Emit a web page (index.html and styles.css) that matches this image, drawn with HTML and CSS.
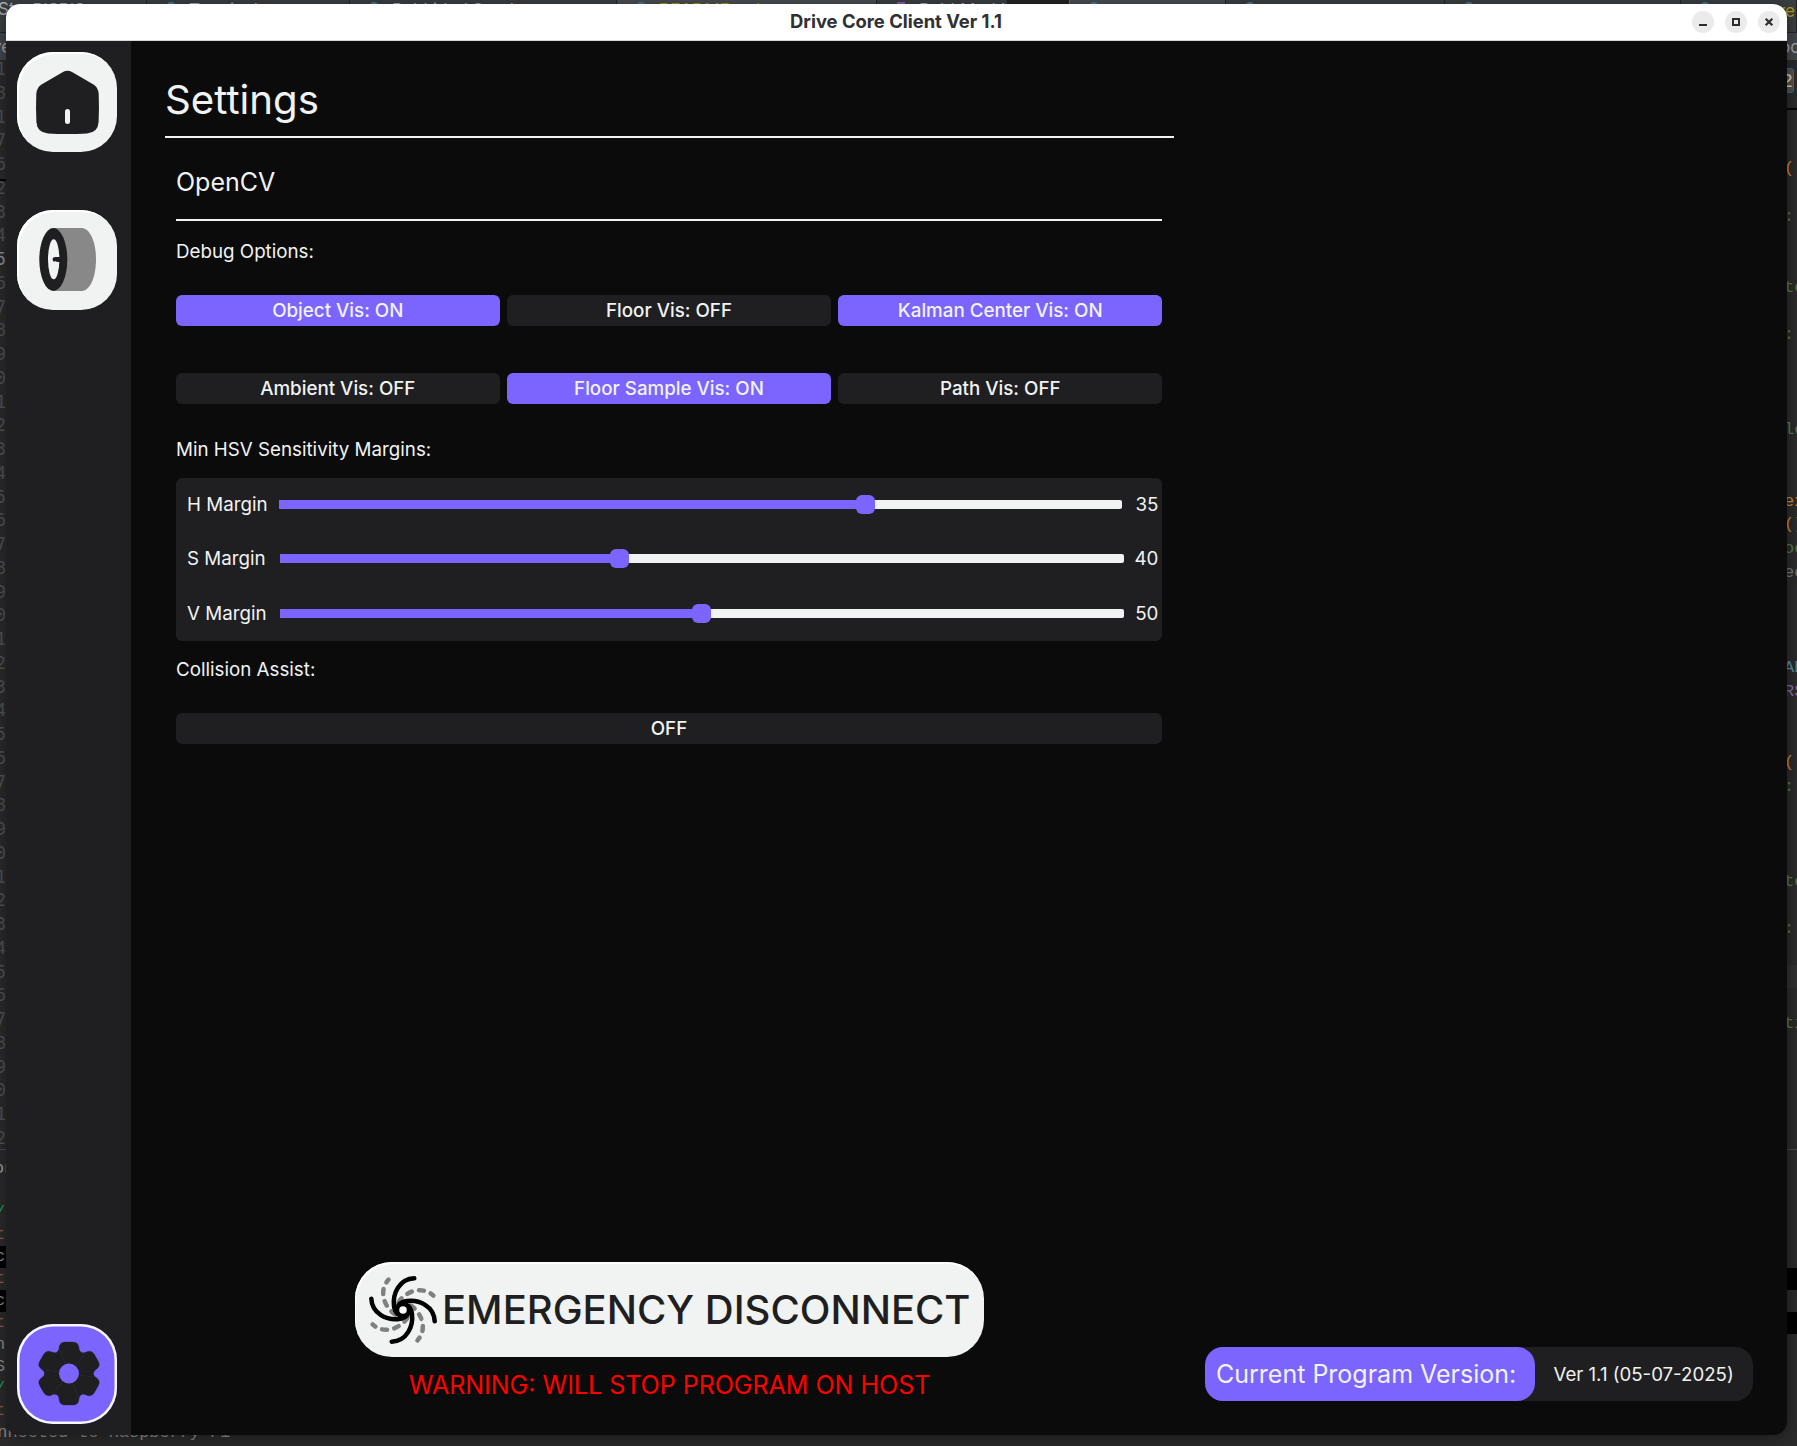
FILE: index.html
```html
<!DOCTYPE html>
<html lang="en">
<head>
<meta charset="utf-8">
<title>Drive Core Client Ver 1.1</title>
<link rel="stylesheet" href="styles.css">
</head>
<body>
<div class="desktop">
  <!-- editor window behind the client -->
  <div class="tabs" aria-hidden="true">
    <div class="tab t1"><span>Sto</span><span class="up">PISPIS</span></div>
    <div class="tab t2"><i class="dot"></i><span>Terminal</span></div>
    <div class="tab t3"><i class="dot"></i><span>RobLidarl Send</span></div>
    <div class="tab t4 active"><i class="dot"></i><span class="yellow">README.md</span></div>
    <div class="tab t5"><i class="dot violet"></i><span>RobLMarkI</span></div>
    <div class="tab t6"></div>
    <div class="tab t7 active"><i class="dot"></i></div>
    <div class="tab t8"><i class="dot"></i></div>
    <div class="tab t9"><i class="dot"></i></div>
    <div class="tab t10"><i class="dot"></i><span class="yellow re">re</span></div>
  </div>
  <div class="path-bar" aria-hidden="true"><span>ve</span><span>oc</span></div>
  <div class="tool" aria-hidden="true">2</div>
  <div class="rule rule-right"></div>
  <div class="rule rule-left"></div>
  <div class="gutter" aria-hidden="true"><b>1</b><b>8</b><b>1</b><b>7</b><b>6</b><b>2</b><b>3</b><b>4</b><b class="here">5</b><b>6</b><b>7</b><b>8</b><b>9</b><b>0</b><b>1</b><b>2</b><b>3</b><b>4</b><b>5</b><b>6</b><b>7</b><b>8</b><b>9</b><b>0</b><b>1</b><b>2</b><b>3</b><b>4</b><b>5</b><b>6</b><b>7</b><b>8</b><b>9</b><b>0</b><b>1</b><b>2</b><b>3</b><b>4</b><b>5</b><b>6</b><b>7</b><b>8</b><b>9</b><b>0</b><b>1</b><b>2</b></div>
  <div class="code" aria-hidden="true"><b class="or">(</b><b></b><b class="gr">:'</b><b></b><b></b><b class="gr">te</b><b></b><b class="gr">:'</b><b></b><b></b><b></b><b class="gr">le</b><b></b><b></b><b class="or">ex</b><b class="or">(]</b><b class="gr">oc</b><b>ec</b><b></b><b></b><b></b><b class="bl">AN</b><b class="vi">RS</b><b></b><b></b><b class="or">(</b><b class="gr">:</b><b></b><b></b><b></b><b class="gr">te</b><b></b><b class="gr">:</b><b></b><b class="cur"></b><b></b><b class="gr">ti</b></div>
  <div class="terminal" aria-hidden="true">
    <b class="bl">on</b><b></b><b class="green">/</b><b class="red">t</b><b class="sel">c</b><b class="red tail">t</b><b class="sel">c</b><b class="red tail">t</b><b>n</b><b>S</b><b class="green">/</b><b class="red">t</b><b class="full">Connected to Raspberry Pi</b>
  </div>

  <div class="window">
    <header class="titlebar">
      <span></span>
      <h1>Drive Core Client Ver 1.1</h1>
      <div class="controls">
        <button class="ctl" aria-label="Minimize"><svg viewBox="0 0 22 22"><path d="M7 13h8v2H7z"/></svg></button>
        <button class="ctl" aria-label="Maximize"><svg viewBox="0 0 22 22"><path d="M7 7h8v8H7zM9 9v4h4V9z" fill-rule="evenodd"/></svg></button>
        <button class="ctl" aria-label="Close"><svg viewBox="0 0 22 22"><path d="M7.7 7.7l6.6 6.6M14.3 7.7l-6.6 6.6" class="line"/></svg></button>
      </div>
    </header>
    <div class="body">
      <nav class="sidebar">
        <button class="nav" aria-label="Home">
          <svg viewBox="0 0 100 100"><path class="ink" d="M46 19.9Q50.5 17.4 55 19.9L76.5 32.6Q81.3 35.6 81.7 42Q82.3 56 81.6 70Q81 80.5 70 81.5Q50.5 82.6 31 81.5Q20 80.5 19.4 70Q18.7 56 19.3 42Q19.7 35.6 24.5 32.6Z"/><rect class="paper" x="48" y="57" width="5" height="15" rx="2.5"/></svg>
        </button>
        <button class="nav second" aria-label="Wheel">
          <svg viewBox="0 0 100 100"><path class="tyre" d="M36.3 18H65C73 18.5 79 32 79 49.5S73 80.5 65 81H36.3Z"/><ellipse class="ink" cx="36.3" cy="49.5" rx="14" ry="31.5"/><ellipse class="paper" cx="36.7" cy="49.3" rx="5.7" ry="20"/><path class="ink" d="M44 46.8C40 47.5 35.6 46 35.6 49.4S40 51.3 44 52Z"/></svg>
        </button>
        <button class="nav current" aria-label="Settings">
          <svg viewBox="0 0 100 100">
            <defs><path id="tooth" d="M0 0L-10 -25.5Q-9.5 -31.5 -4 -31.5H4Q9.5 -31.5 10 -25.5C10.2 -21.5 13.5 -19.6 17.08 -21.41Z"/></defs>
            <g class="gear" transform="translate(52 49.5)"><use href="#tooth"/><use href="#tooth" transform="rotate(60)"/><use href="#tooth" transform="rotate(120)"/><use href="#tooth" transform="rotate(180)"/><use href="#tooth" transform="rotate(240)"/><use href="#tooth" transform="rotate(300)"/></g>
            <circle class="hub" cx="52" cy="49.5" r="10"/>
          </svg>
        </button>
      </nav>
      <main class="page">
        <section class="settings">
          <h2 class="page-title">Settings</h2>
          <div class="group">
            <h3 class="group-title">OpenCV</h3>
            <p class="label debug">Debug Options:</p>
            <div class="toggles">
              <button class="toggle on">Object Vis: ON</button>
              <button class="toggle">Floor Vis: OFF</button>
              <button class="toggle on">Kalman Center Vis: ON</button>
              <button class="toggle">Ambient Vis: OFF</button>
              <button class="toggle on">Floor Sample Vis: ON</button>
              <button class="toggle">Path Vis: OFF</button>
            </div>
            <p class="label hsv">Min HSV Sensitivity Margins:</p>
            <div class="sliders">
              <div class="row h"><span>H Margin</span><div class="track"><div class="fill" style="width:69.6%"></div></div><output>35</output></div>
              <div class="row"><span>S Margin</span><div class="track"><div class="fill" style="width:40.2%"></div></div><output>40</output></div>
              <div class="row"><span>V Margin</span><div class="track"><div class="fill" style="width:50%"></div></div><output>50</output></div>
            </div>
            <p class="label assist">Collision Assist:</p>
            <button class="toggle">OFF</button>
          </div>
          <div class="emergency">
            <button class="disconnect">
              <svg viewBox="-35 -35 70 70">
                <defs><path id="arm" d="M11.3 -31.7C-4 -31 -10.5 -16 -9 -4C-8 3 -4 6 1 6"/></defs>
                <g class="ghost"><use href="#arm" transform="rotate(-45)"/><use href="#arm" transform="rotate(45)"/><use href="#arm" transform="rotate(135)"/><use href="#arm" transform="rotate(225)"/></g>
                <g class="arms"><use href="#arm"/><use href="#arm" transform="rotate(90)"/><use href="#arm" transform="rotate(180)"/><use href="#arm" transform="rotate(270)"/></g>
                <circle class="eye" r="5.5"/>
              </svg>
              <span>EMERGENCY DISCONNECT</span>
            </button>
            <p class="warning">WARNING: WILL STOP PROGRAM ON HOST</p>
          </div>
        </section>
        <aside class="side">
          <div class="version"><span class="version-key">Current Program Version:</span><span class="version-value">Ver 1.1 (05-07-2025)</span></div>
        </aside>
      </main>
    </div>
  </div>
</div>
</body>
</html>
```
FILE: styles.css
```css
* { box-sizing: border-box; margin: 0; padding: 0; }
:root { --violet: #7c64ff; --dark: #1f1f21; --paper: #f1f3f3; --bg: #0b0b0b; }
body { width: 1797px; height: 1446px; overflow: hidden; font-family: Inter, "Liberation Sans", sans-serif; }
button { border: 0; font: inherit; color: inherit; display: block; }
svg { display: block; }
.desktop { position: relative; width: 1797px; height: 1446px; padding: 4px 10px 11px 6px; overflow: hidden; background: #2b2b2b; }

/* editor behind */
.tabs { position: absolute; left: 0; top: 0; width: 1797px; height: 32px; display: flex; background: #3c3f41; font-size: 17px; line-height: 20px; color: #a9acae; }
.tab { position: relative; height: 32px; border-right: 1px solid #242526; display: flex; white-space: nowrap; overflow: hidden; }
.tab.active { background: #4b4f52; }
.tab .dot { width: 8px; height: 8px; margin: 2px 14px 0 20px; border-radius: 4px; background: #3f7f9d; }
.tab .violet { border-radius: 0; background: #8a5cb5; }
.t1 { width: 147px; } .t1 span { margin-left: -2px; line-height: 18px; } .t1 .up { margin-left: 8px; line-height: 20px; }
.t2 { width: 203px; } .t3 { width: 267px; } .t4 { width: 260px; } .t5 { width: 131px; }
.t6 { width: 62px; background: #252525; border-color: #8b6b35; } .t7 { width: 156px; } .t8 { width: 219px; } .t9 { width: 236px; } .t10 { width: 116px; }
.yellow { color: #b59a18; }
.tab .re { position: absolute; right: 1px; top: 0; line-height: 22px; }
.path-bar { position: absolute; left: 0; top: 32px; width: 1797px; height: 28px; display: flex; justify-content: space-between; border-top: 1px solid #242526; background: #43464b; font-size: 17px; line-height: 28px; color: #a4a7aa; }
.path-bar span { margin: 0 -8px; }
.path-bar span + span { margin: 0 -3px; }
.tool { position: absolute; right: 3px; top: 68px; width: 22px; height: 25px; border: 1px solid #1673b8; border-radius: 3px; background: #574f40; color: #ccc; font: 20px/25px "Liberation Mono", monospace; text-align: right; }
.rule { position: absolute; height: 2px; background: #050505; }
.rule-right { right: 0; top: 108px; width: 10px; }
.rule-left { left: 0; top: 179px; width: 6px; }
.gutter { position: absolute; left: 0; top: 58px; width: 6px; display: flex; flex-direction: column; align-items: flex-end; }
.gutter b { height: 23.75px; font: 17px/23.75px "DejaVu Sans Mono", monospace; color: #505356; }
.gutter .here { color: #8c8f92; }
.code { position: absolute; left: 1787px; top: 157px; width: 10px; overflow: hidden; }
.code b { display: block; height: 23.75px; font: 17px/23.75px "Liberation Mono", monospace; color: #77797c; text-indent: -3px; white-space: nowrap; }
.code .cur { background: #313131; }
.code .or { color: #c9883f; } .code .gr { color: #587a4c; } .code .bl { color: #5a8ca6; } .code .vi { color: #8d69a5; }
.terminal { position: absolute; left: 0; top: 1149px; width: 1797px; padding-top: 8px; border-top: 1px solid #47494b; }
.terminal b { display: block; height: 22px; font: 16.9px/22px "Liberation Mono", monospace; color: #8b8b8b; text-indent: -5px; white-space: pre; }
.terminal .sel { width: 6px; background: #000; }
.terminal .tail { background: linear-gradient(90deg, transparent 50%, #000 50%); }
.terminal .red { color: #8d5a55; } .terminal .green { color: #239a62; } .terminal .bl { color: #9aa7b0; text-indent: -6px; }
.terminal .full { text-indent: -23px; }

/* client window */
.window { position: relative; height: 1431px; border-radius: 14px; overflow: hidden; box-shadow: 0 2px 14px 2px rgba(0, 0, 0, .35); display: flex; flex-direction: column; background: var(--bg); }
.titlebar { height: 37px; flex: none; display: grid; grid-template-columns: 1fr auto 1fr; align-items: center; border-bottom: 1px solid #d8d8d8; background: #fff; color: #303033; padding-right: 7px; }
.titlebar h1 { font-size: 18.4px; font-weight: 700; line-height: 34px; height: 36px; padding-left: 6px; }
.controls { display: flex; justify-content: flex-end; gap: 11px; }
.ctl { width: 22px; height: 22px; border-radius: 50%; background: #ebebeb; color: #2e2e31; }
.ctl svg { fill: currentColor; }
.ctl .line { stroke: currentColor; stroke-width: 2.2; }
.body { flex: 1; display: flex; }
.sidebar { width: 125px; background: var(--dark); padding: 11px 0 11px 11px; display: flex; flex-direction: column; }
.nav { width: 100px; height: 100px; border-radius: 36px; background: var(--paper); box-shadow: inset 2px 2px 0 #fff; }
.second { margin-top: 58px; }
.current { margin-top: auto; background: var(--violet); box-shadow: inset 0 0 0 2.5px #f6f7fa; }
.ink { fill: var(--dark); } .paper { fill: var(--paper); } .tyre { fill: #888889; }
.gear { fill: var(--dark); stroke: var(--dark); stroke-width: .3; }
.hub { fill: var(--violet); }

.page { flex: 1; display: flex; justify-content: space-between; padding: 0 34px; }
.settings { width: 1009px; display: flex; flex-direction: column; }
.page-title { height: 97px; padding-top: 34px; font-size: 40.2px; line-height: 49px; font-weight: 400; color: var(--paper); border-bottom: 2px solid var(--paper); }
.group { padding: 0 12px 0 11px; color: var(--paper); }
.group-title { height: 83px; padding-top: 29px; font-size: 25px; line-height: 30px; font-weight: 400; border-bottom: 2px solid var(--paper); margin-bottom: 19px; }
.label { font-size: 18.75px; line-height: 24px; }
.debug { margin-bottom: 31px; }
.toggles { display: grid; grid-template-columns: repeat(3, 1fr); column-gap: 7.7px; row-gap: 46.5px; }
.toggle { width: 100%; height: 31px; border-radius: 6px; background: var(--dark); color: var(--paper); font-size: 18.75px; font-weight: 500; line-height: 31px; text-align: center; }
.toggle.on { background: var(--violet); }
.hsv { margin: 34px 0 16px; }
.sliders { height: 163px; border-radius: 6px; background: var(--dark); padding: 0 4px 0 11px; font-size: 18.75px; display: grid; grid-template-rows: 53.5px 55px 54.5px; }
.row { display: grid; grid-template-columns: 82px 843.5px 1fr; column-gap: 11px; align-items: center; }
.row.h { grid-template-columns: 81px 843px 1fr; }
.row output { text-align: right; }
.track { height: 9px; border-radius: 2px; background: var(--paper); }
.fill { height: 9px; border-radius: 2px; background: var(--violet); display: flex; align-items: center; justify-content: flex-end; }
.fill::after { content: ""; flex: none; width: 19px; height: 19px; border-radius: 6px; background: var(--violet); margin-right: -9.5px; }
.assist { margin: 17px 0 31px; }
.emergency { margin: auto 0 35px; display: flex; flex-direction: column; align-items: center; }
.disconnect { width: 629px; height: 95px; border-radius: 37px; background: var(--paper); box-shadow: inset 1px 2px 0 #fff; display: flex; align-items: center; padding-left: 12.5px; gap: 4.5px; color: var(--dark); font-size: 40px; font-weight: 500; white-space: nowrap; }
.disconnect svg { width: 70px; height: 70px; }
.arms, .ghost { fill: none; stroke: #000; stroke-width: 4.5; stroke-linecap: round; }
.ghost { stroke: #7f8180; stroke-dasharray: 5 7.3; stroke-dashoffset: 1.5; }
.eye { fill: #fff; stroke: #000; stroke-width: 3.5; }
.warning { font-size: 25px; line-height: 30px; margin-top: 13px; color: #f00; }
.side { display: flex; align-items: flex-end; padding-bottom: 34px; }
.version { height: 54px; width: 548px; border-radius: 18px; background: var(--dark); color: var(--paper); display: flex; align-items: center; }
.version-key { width: 330px; height: 54px; border-radius: 18px; background: var(--violet); font-size: 25px; line-height: 54px; padding-left: 11px; }
.version-value { font-size: 18.65px; padding-left: 18.5px; }
```
